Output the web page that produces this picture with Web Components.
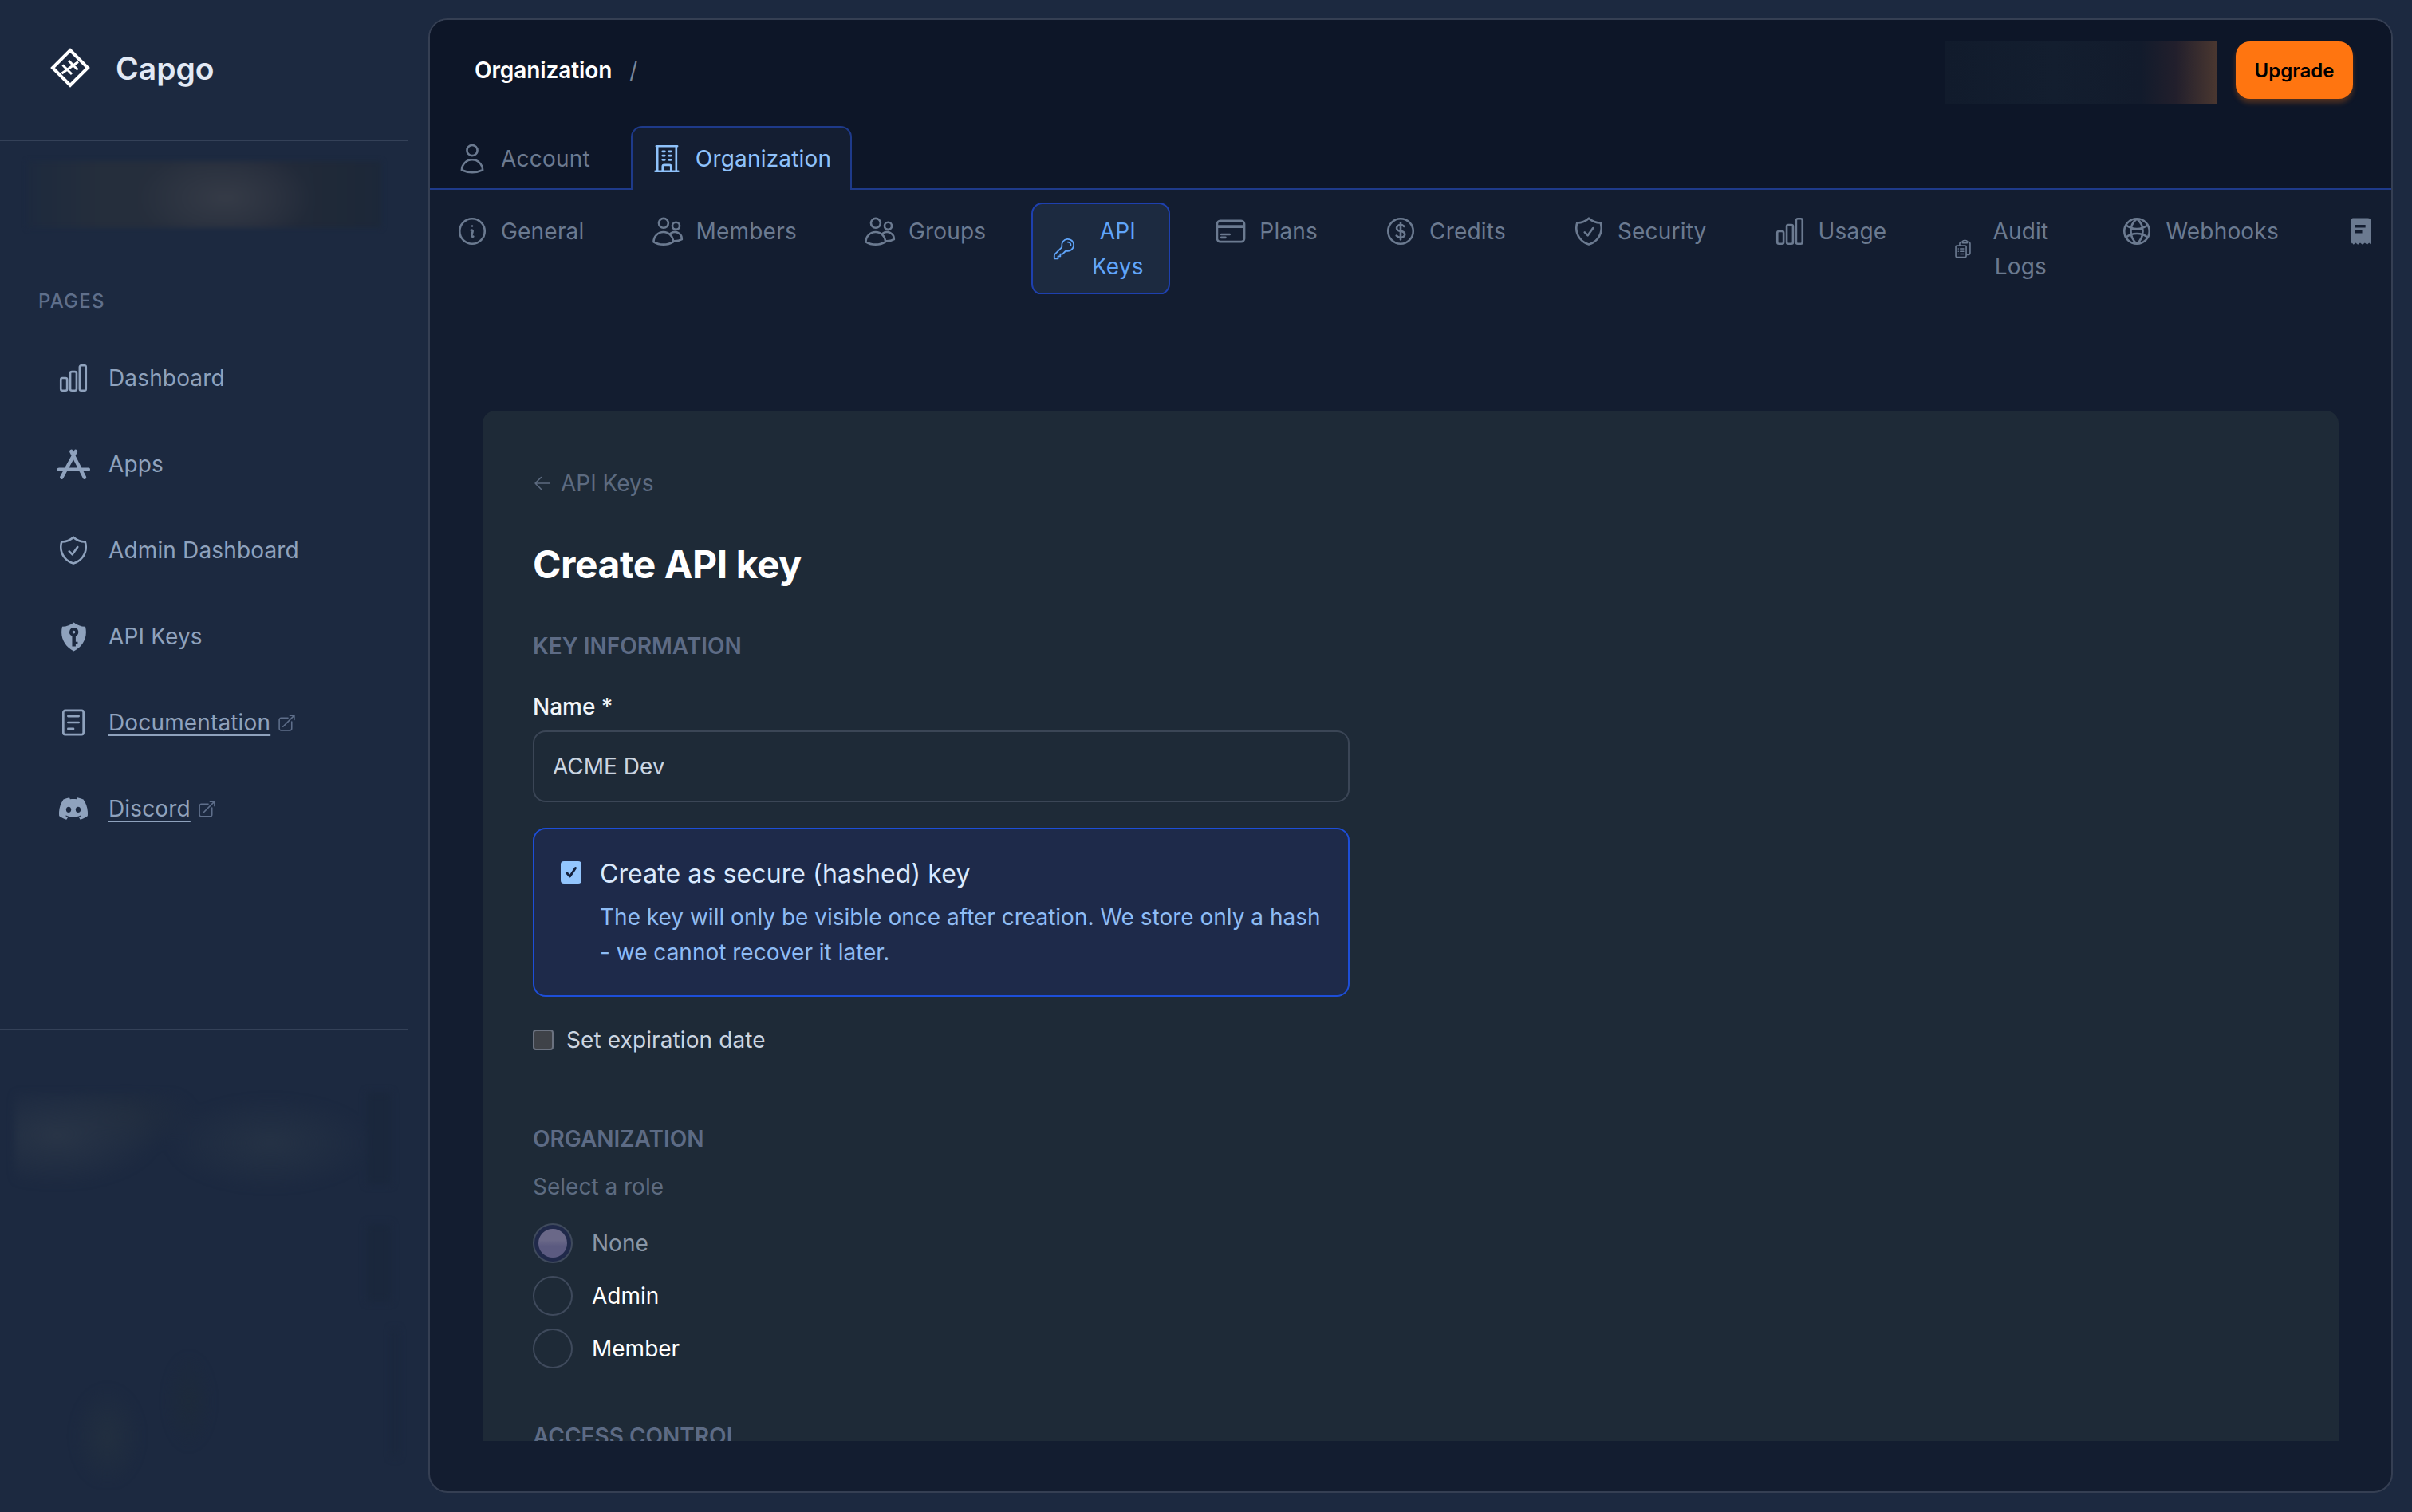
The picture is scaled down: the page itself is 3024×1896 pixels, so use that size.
<!DOCTYPE html>
<html lang="en">
<head>
<meta charset="utf-8">
<title>Capgo</title>
<style>
  html, body { margin: 0; padding: 0; background: #1c2940; }
  body { font-family: Inter, "Noto Sans", sans-serif; width: 3024px; height: 1896px; overflow: hidden; }
</style>
</head>
<body>
<app-shell>
  <side-bar slot="side"></side-bar>
  <main-panel slot="main">
    <form-card></form-card>
  </main-panel>
</app-shell>

<script>
const ICONS = {
  user: 'M15.75 6a3.75 3.75 0 1 1-7.5 0 3.75 3.75 0 0 1 7.5 0ZM4.501 20.118a7.5 7.5 0 0 1 14.998 0A17.933 17.933 0 0 1 12 21.75c-2.676 0-5.216-.584-7.499-1.632Z',
  building: 'M3.75 21h16.5M4.5 3h15M5.25 3v18m13.5-18v18M9 6.75h1.5m-1.5 3h1.5m-1.5 3h1.5m3-6H15m-1.5 3H15m-1.5 3H15M9 21v-3.375c0-.621.504-1.125 1.125-1.125h3.75c.621 0 1.125.504 1.125 1.125V21',
  info: 'm11.25 11.25.041-.02a.75.75 0 0 1 1.063.852l-.708 2.836a.75.75 0 0 0 1.063.853l.041-.021M21 12a9 9 0 1 1-18 0 9 9 0 0 1 18 0Zm-9-3.75h.008v.008H12V8.25Z',
  users: 'M12.5 6.2a3.4 3.4 0 1 1-6.8 0 3.4 3.4 0 0 1 6.8 0ZM20.6 8.2a2.6 2.6 0 1 1-5.2 0 2.6 2.6 0 0 1 5.2 0ZM2 19.6a7 7 0 0 1 14 0c-1.9 1.2-4.3 1.9-7 1.9s-5.100-.7-7-1.900ZM14.300 13.500a5 5 0 0 1 7.900 4.300c-1.300.8-3.100 1.300-5.200 1.300',
  key: 'M15.75 5.25a3 3 0 0 1 3 3m3 0a6 6 0 0 1-7.029 5.912c-.563-.097-1.159.026-1.563.43L10.5 17.25H8.25v2.25H6v2.25H2.25v-2.818c0-.597.237-1.17.659-1.591l6.499-6.499c.404-.404.527-1 .43-1.563A6 6 0 1 1 21.75 8.25Z',
  card: 'M2.25 8.25h19.5M2.25 9h19.5m-16.5 5.25h6m-6 2.25h3m-3.75 3h15a2.25 2.25 0 0 0 2.25-2.25V6.750A2.25 2.25 0 0 0 19.5 4.500h-15a2.25 2.25 0 0 0-2.25 2.25v10.5A2.25 2.25 0 0 0 4.500 19.500Z',
  dollar: 'M12 6v12m-3-2.818.879.659c1.171.879 3.07.879 4.242 0 1.172-.879 1.172-2.303 0-3.182C13.536 12.219 12.768 12 12 12c-.725 0-1.45-.22-2.003-.659-1.106-.879-1.106-2.303 0-3.182s2.9-.879 4.006 0l.415.33M21 12a9 9 0 1 1-18 0 9 9 0 0 1 18 0Z',
  shield: 'M9 12.75 11.25 15 15 9.75m-3-7.036A11.959 11.959 0 0 1 3.598 6 11.99 11.99 0 0 0 3 9.749c0 5.592 3.824 10.29 9 11.623 5.176-1.332 9-6.03 9-11.622 0-1.31-.21-2.571-.598-3.751h-.152c-3.196 0-6.1-1.248-8.25-3.285Z',
  chart: 'M3 13.125C3 12.504 3.504 12 4.125 12h2.25c.621 0 1.125.504 1.125 1.125v6.75C7.5 20.496 6.996 21 6.375 21h-2.25A1.125 1.125 0 0 1 3 19.875v-6.75ZM9.75 8.625c0-.621.504-1.125 1.125-1.125h2.25c.621 0 1.125.504 1.125 1.125v11.25c0 .621-.504 1.125-1.125 1.125h-2.25a1.125 1.125 0 0 1-1.125-1.125V8.625ZM16.5 4.125c0-.621.504-1.125 1.125-1.125h2.25C20.496 3 21 3.504 21 4.125v15.75c0 .621-.504 1.125-1.125 1.125h-2.25a1.125 1.125 0 0 1-1.125-1.125V4.125Z',
  globe: 'M12 21a9 9 0 1 0 0-18 9 9 0 0 0 0 18ZM12 3c-2.800 2.300-4.300 5.400-4.300 9s1.500 6.700 4.300 9c2.800-2.300 4.300-5.400 4.300-9s-1.500-6.700-4.300-9ZM4.200 7.600c2.200 1.800 4.900 2.700 7.800 2.700s5.600-.9 7.800-2.700M4.200 16.400c2.200-1.800 4.900-2.700 7.800-2.700s5.600.9 7.800 2.700',
  clipboard: 'M9 12h3.75M9 15h3.75M9 18h3.75m3 .75H18a2.25 2.25 0 0 0 2.25-2.25V6.108c0-1.135-.845-2.098-1.976-2.192a48.424 48.424 0 0 0-1.123-.08m-5.801 0c-.065.21-.1.433-.1.664 0 .414.336.75.75.75h4.5a.75.75 0 0 0 .75-.75 2.25 2.25 0 0 0-.1-.664m-5.8 0A2.251 2.251 0 0 1 13.5 2.25H15c1.012 0 1.867.668 2.15 1.586m-5.8 0c-.376.023-.75.05-1.124.08C9.095 4.01 8.25 4.973 8.25 6.108V8.25m0 0H4.875c-.621 0-1.125.504-1.125 1.125v11.25c0 .621.504 1.125 1.125 1.125h9.75c.621 0 1.125-.504 1.125-1.125V9.375c0-.621-.504-1.125-1.125-1.125H8.25ZM6.75 12h.008v.008H6.75V12Zm0 3h.008v.008H6.75V15Zm0 3h.008v.008H6.75V18Z',
  back: 'M10.5 19.5 3 12m0 0 7.5-7.5M3 12h18',
  external: 'M13.5 6H5.25A2.25 2.25 0 0 0 3 8.25v10.5A2.25 2.25 0 0 0 5.25 21h10.5A2.25 2.25 0 0 0 18 18.75V10.5m-10.5 6L21 3m0 0h-5.25M21 3v5.25',
  doc: 'M5.500 2.500h13a1.500 1.500 0 0 1 1.500 1.500v16a1.500 1.500 0 0 1-1.500 1.500h-13A1.500 1.500 0 0 1 4 20V4a1.500 1.500 0 0 1 1.500-1.500ZM7.800 7h8.400M7.800 12h8.400M7.800 17h4.200',
  store: 'M10.600 3.650 19.300 20.700M13.560 3.650 4.330 20.700M2.600 15.500h19.200'
};
const FILLED = {
  keyshield: '<path fill-rule="evenodd" d="M12 1.500c2.400 2 5.200 3 8.500 3.100.3 1.300.5 2.700.5 4.100 0 6-3.600 11.300-9 13.800-5.400-2.500-9-7.800-9-13.800 0-1.400.2-2.800.5-4.100 3.300-.1 6.100-1.100 8.500-3.100ZM12 5.300a3.200 3.200 0 0 0-1.200 6.150V19h2.600v-1.500h1.500v-1.900h-1.500v-4.150A3.200 3.200 0 0 0 12 5.300Zm0 2.100a1.100 1.100 0 1 1 0 2.200 1.100 1.100 0 0 1 0-2.200Z"/>',
  discord: '<path d="M20.317 4.3698a19.7913 19.7913 0 00-4.8851-1.5152.0741.0741 0 00-.0785.0371c-.211.3753-.4447.8648-.6083 1.2495-1.8447-.2762-3.68-.2762-5.4868 0-.1636-.3933-.4058-.8742-.6177-1.2495a.077.077 0 00-.0785-.037 19.7363 19.7363 0 00-4.8852 1.515.0699.0699 0 00-.0321.0277C.5334 9.0458-.319 13.5799.0992 18.0578a.0824.0824 0 00.0312.0561c2.0528 1.5076 4.0413 2.4228 5.9929 3.0294a.0777.0777 0 00.0842-.0276c.4616-.6304.8731-1.2952 1.226-1.9942a.076.076 0 00-.0416-.1057c-.6528-.2476-1.2743-.5495-1.8722-.8923a.077.077 0 01-.0076-.1277c.1258-.0943.2517-.1923.3718-.2914a.0743.0743 0 01.0776-.0105c3.9278 1.7933 8.18 1.7933 12.0614 0a.0739.0739 0 01.0785.0095c.1202.099.246.1981.3728.2924a.077.077 0 01-.0066.1276 12.2986 12.2986 0 01-1.873.8914.0766.0766 0 00-.0407.1067c.3604.698.7719 1.3628 1.225 1.9932a.076.076 0 00.0842.0286c1.961-.6067 3.9495-1.5219 6.0023-3.0294a.077.077 0 00.0313-.0552c.5004-5.177-.8382-9.6739-3.5485-13.6604a.061.061 0 00-.0312-.0286zM8.02 15.3312c-1.1825 0-2.1569-1.0857-2.1569-2.419 0-1.3332.9555-2.4189 2.157-2.4189 1.2108 0 2.1757 1.0952 2.1568 2.419 0 1.3332-.9555 2.4189-2.1569 2.4189zm7.9748 0c-1.1825 0-2.1569-1.0857-2.1569-2.419 0-1.3332.9554-2.4189 2.1569-2.4189 1.2108 0 2.1757 1.0952 2.1568 2.419 0 1.3332-.946 2.4189-2.1568 2.4189Z"/>',
  receipt: '<path fill-rule="evenodd" d="M6 1.500h12a2.500 2.500 0 0 1 2.500 2.500v18.500l-1.400-1.300-1.600 1.300-1.800-1.300-1.800 1.300-1.900-1.300-1.800 1.300-1.800-1.300-1.600 1.300-1.300-1.300-.800 1.300V4A2.500 2.500 0 0 1 6 1.500ZM8.200 7v2.200h8V7h-8Zm0 4.400v2.200h5.400v-2.200H8.200Z"/>'
};

class UiIcon extends HTMLElement {
  connectedCallback() {
    const name = this.getAttribute('name');
    const size = this.getAttribute('size') || 42;
    const sw = this.getAttribute('stroke') || 1.5;
    const body = FILLED[name]
      ? `<svg viewBox="0 0 24 24" fill="currentColor">${FILLED[name]}</svg>`
      : `<svg viewBox="0 0 24 24" fill="none" stroke="currentColor" stroke-width="${sw}" stroke-linecap="round" stroke-linejoin="round"><path d="${ICONS[name]}"/></svg>`;
    this.attachShadow({ mode: 'open' }).innerHTML = `
      <style>
        :host { display: inline-flex; flex: none; width: ${size}px; height: ${size}px; }
        svg { width: 100%; height: 100%; display: block; }
      </style>${body}`;
  }
}

class AppShell extends HTMLElement {
  constructor() {
    super();
    this.attachShadow({ mode: 'open' }).innerHTML = `
      <style>
        :host { display: flex; width: 3024px; height: 1896px; background: #1c2940; }
        ::slotted([slot=side]) { flex: none; width: 537px; }
        ::slotted([slot=main]) { flex: 1; min-width: 0; margin: 23px 24px 24px 0; }
      </style>
      <slot name="side"></slot><slot name="main"></slot>`;
  }
}

class NavItem extends HTMLElement {
  connectedCallback() {
    const link = this.hasAttribute('external');
    this.attachShadow({ mode: 'open' }).innerHTML = `
      <style>
        :host { display: flex; align-items: center; height: 108px; padding-left: 74px; color: #8fa2bd; font-size: 28px; letter-spacing: .15px; }
        .ic { width: 36px; display: flex; justify-content: center; margin-right: 26px; }
        a { color: inherit; text-decoration: ${link ? 'underline' : 'none'}; text-underline-offset: 5px; text-decoration-thickness: 2px; }
        .ext { color: #5f6f8b; margin-left: 8px; display: flex; }
      </style>
      <span class="ic"><ui-icon name="${this.getAttribute('icon')}" size="${this.getAttribute('size') || 42}" stroke="${this.getAttribute('stroke') || 1.5}"></ui-icon></span>
      <a><slot></slot></a>
      ${link ? '<span class="ext"><ui-icon name="external" size="25"></ui-icon></span>' : ''}`;
  }
}

class SideBar extends HTMLElement {
  constructor() {
    super();
    this.attachShadow({ mode: 'open' }).innerHTML = `
      <style>
        :host { display: block; }
        .brand { width: 512px; height: 177px; border-bottom: 2px solid #344158; display: flex; align-items: center; padding-bottom: 5px; box-sizing: border-box; }
        .brand svg { width: 50px; height: 50px; margin-left: 63px; }
        .brand b { margin-left: 32px; font-size: 39px; font-weight: 600; color: #e2e9f5; }
        .blur-org { margin: 25px 0 0 34px; width: 444px; height: 84px; filter: blur(3px);
          background: radial-gradient(ellipse 110px 60px at 56% 55%, #353b47 0%, rgba(53,59,71,0) 100%), linear-gradient(90deg, #1d2a3e 0%, #252e3c 22%, #262e3c 45%, #242b3a 68%, #1f2938 85%, #1c2839 100%); }
        .pages { margin: 78px 0 28px 48px; font-size: 24px; line-height: 28px; font-weight: 500; letter-spacing: 1.2px; color: #5f6f8b; }
        .rule { width: 512px; height: 2px; background: #344158; margin-top: 222px; }
        .blur-user { margin: 78px 0 0 18px; width: 486px; height: 490px; filter: blur(5px);
          background:
            radial-gradient(ellipse 130px 65px at 11% 11%, #293547 0%, rgba(41,53,71,0) 100%),
            radial-gradient(ellipse 130px 60px at 66% 13%, #253245 0%, rgba(37,50,69,0) 100%),
            radial-gradient(ellipse 90px 45px at 29% 6%, #212d3f 0%, rgba(33,45,63,0) 100%),
            linear-gradient(#1a273c, #1a273c) 97% 0 / 30px 115px no-repeat,
            linear-gradient(#1a273c, #1a273c) 97% 42% / 30px 97px no-repeat,
            linear-gradient(#1a273c, #1a273c) 99% 90% / 8px 160px no-repeat,
            radial-gradient(ellipse 44px 64px at 24% 88%, #222f40 0%, rgba(34,47,64,0) 100%),
            radial-gradient(ellipse 30px 60px at 45% 79%, #1d2a3b 0%, rgba(29,42,59,0) 100%); }
      </style>
      <div class="brand">
        <svg viewBox="0 0 50 50" fill="none" stroke="#fff">
          <path stroke-width="4" d="M25 3 47 25 25 47 3 25Z"/>
          <path stroke-width="3" d="M14.500 32 35 17.500M15.500 21.500 27 33M23 16 34.500 27.500"/>
        </svg>
        <b>Capgo</b>
      </div>
      <div class="blur-org"></div>
      <div class="pages">PAGES</div>
      <nav>
        <nav-item icon="chart">Dashboard</nav-item>
        <nav-item icon="store" size="46" stroke="2.400">Apps</nav-item>
        <nav-item icon="shield">Admin Dashboard</nav-item>
        <nav-item icon="keyshield" size="41">API Keys</nav-item>
        <nav-item icon="doc" size="38" stroke="1.700" external>Documentation</nav-item>
        <nav-item icon="discord" size="36" external>Discord</nav-item>
      </nav>
      <div class="rule"></div>
      <div class="blur-user"></div>`;
  }
}

class TabItem extends HTMLElement {
  connectedCallback() {
    const wrap = this.getAttribute('wrap');
    const gap = this.getAttribute('gap') || 15;
    this.attachShadow({ mode: 'open' }).innerHTML = `
      <style>
        :host { display: block; flex: none; font-size: 28px; letter-spacing: .2px; line-height: 44px; color: #6b7a90; }
        :host([active]) { margin: 0 -2px; }
        .t { display: flex; align-items: center; gap: ${gap}px; box-sizing: border-box; border: 2px solid transparent; padding: 12px 24px 12px 22px; border-radius: 14px; }
        :host([active]) .t { color: #60a5fa; background: #1c2a40; border-color: #1e40af; padding: 12px 26px 12px 24px; }
        .l { min-height: 44px; ${wrap ? `width: ${wrap}px; text-align: center;` : ''} }
      </style>
      <div class="t">
        <ui-icon name="${this.getAttribute('icon')}" size="${this.getAttribute('size') || 42}"></ui-icon>
        <span class="l"><slot></slot></span>
      </div>`;
  }
}

class TopTab extends HTMLElement {
  connectedCallback() {
    this.attachShadow({ mode: 'open' }).innerHTML = `
      <style>
        :host { display: block; flex: none; font-size: 28px; letter-spacing: .2px; color: #6b7a90; margin-bottom: -2px; }
        .t { display: flex; align-items: center; gap: 15px; height: 80px; box-sizing: border-box; padding: 0 24px 0 22px; border: 2px solid transparent; border-bottom: 0; border-radius: 14px 14px 0 0; }
        :host([active]) .t { color: #8fc2fb; background: #141e32; border-color: #1e3a8a; }
      </style>
      <div class="t"><ui-icon name="${this.getAttribute('icon')}"></ui-icon><span><slot></slot></span></div>`;
  }
}

class MainPanel extends HTMLElement {
  constructor() {
    super();
    this.attachShadow({ mode: 'open' }).innerHTML = `
      <style>
        :host { display: flex; flex-direction: column; box-sizing: border-box; border: 2px solid #353f53; border-radius: 24px; overflow: hidden; background: #131d30; }
        header { flex: none; background: #0d1628; border-bottom: 2px solid #1e3a8a; }
        .top { height: 126px; display: flex; align-items: center; padding: 0 48px 0 56px; }
        .crumb { font-size: 28px; font-weight: 600; letter-spacing: -.1px; color: #fff; }
        .sep { margin-left: 22px; font-size: 28px; color: #7b8799; }
        .blur { margin-left: auto; width: 340px; height: 79px; margin-top: 5px; background: linear-gradient(90deg, #111b2c 0%, #131e2f 40%, #121b2c 72%, #221f2c 85%, #4a3730 100%); }
        .up { margin-left: 24px; width: 147px; height: 72px; border: 0; border-radius: 18px; background: #ff7510; color: #000; font: 600 24px Inter, sans-serif; box-shadow: 0 5px 6px rgba(255,117,16,.28); }
        .tabs { height: 85px; display: flex; align-items: flex-end; gap: 25px; padding-left: 8px; }
        .sub { flex: none; display: flex; align-items: flex-start; gap: 33px; padding: 16px 0 0 8px; overflow: hidden; height: 131px; box-sizing: border-box; }
        ::slotted(*) { flex: 1; min-height: 0; margin: 146px 66px 63px 66px; }
      </style>
      <header>
        <div class="top">
          <span class="crumb">Organization</span><span class="sep">/</span>
          <div class="blur"></div>
          <button class="up">Upgrade</button>
        </div>
        <div class="tabs">
          <top-tab icon="user">Account</top-tab>
          <top-tab icon="building" active>Organization</top-tab>
        </div>
      </header>
      <div class="sub">
        <tab-item icon="info">General</tab-item>
        <tab-item icon="users">Members</tab-item>
        <tab-item icon="users">Groups</tab-item>
        <tab-item icon="key" size="30" gap="14" wrap="76" active>API Keys</tab-item>
        <tab-item icon="card">Plans</tab-item>
        <tab-item icon="dollar">Credits</tab-item>
        <tab-item icon="shield">Security</tab-item>
        <tab-item icon="chart">Usage</tab-item>
        <tab-item icon="clipboard" size="26" gap="17" wrap="84">Audit Logs</tab-item>
        <tab-item icon="globe">Webhooks</tab-item>
        <tab-item icon="receipt" size="38"></tab-item>
      </div>
      <slot></slot>`;
  }
}

class RoleRadio extends HTMLElement {
  connectedCallback() {
    this.attachShadow({ mode: 'open' }).innerHTML = `
      <style>
        :host { display: flex; align-items: center; gap: 24px; height: 50px; font-size: 28px; color: #fff; }
        :host([checked]) { color: #8a97a8; }
        .r { width: 50px; height: 50px; box-sizing: border-box; border: 2px solid #3f4a5c; border-radius: 50%; display: flex; align-items: center; justify-content: center; }
        :host([checked]) .r { background: #20294a; }
        :host([checked]) .r::after { content: ""; width: 36px; height: 36px; border-radius: 50%; background: linear-gradient(#6a6888 0 40%, #5b5a80 60%); }
      </style>
      <span class="r"></span><span><slot></slot></span>`;
  }
}

class FormCard extends HTMLElement {
  constructor() {
    super();
    this.attachShadow({ mode: 'open' }).innerHTML = `
      <style>
        :host { display: block; background: #1e2a37; border-radius: 16px 16px 0 0; overflow: hidden; padding: 71px 0 0 63px; font-size: 28px; line-height: 40px; box-sizing: border-box; }
        .col { width: 1024px; }
        .back { display: flex; align-items: center; gap: 11px; color: #5d6b80; }
        h1 { margin: 52px 0 0; font-size: 48px; line-height: 60px; font-weight: 700; letter-spacing: -.45px; color: #fff; }
        h2 { margin: 0; font-size: 28px; line-height: 40px; font-weight: 600; color: #5d6b85; }
        .name { margin-top: 36px; font-weight: 500; color: #f1f5f9; }
        .input { margin-top: 10px; height: 90px; box-sizing: border-box; border: 2px solid #3b4656; border-radius: 16px; display: flex; align-items: center; padding-left: 23px; color: #cbd5e1; font-size: 28px; }
        .secure { margin-top: 32px; box-sizing: border-box; height: 212px; background: #1e2a4a; border: 2px solid #1d4ed8; border-radius: 16px; padding: 32px 33px 31px 33px; display: flex; gap: 23px; }
        .box { flex: none; width: 26px; height: 28px; margin-top: 8px; border-radius: 4px; background: #93c5fd; display: flex; align-items: center; justify-content: center; }
        .box svg { width: 20px; height: 20px; }
        .title { font-size: 32px; line-height: 48px; letter-spacing: .1px; color: #dbeafe; }
        .desc { margin-top: 8px; line-height: 44px; color: #8ebcf5; }
        .exp { margin-top: 34px; display: flex; align-items: center; gap: 16px; letter-spacing: .1px; color: #cbd5e1; }
        .exp i { width: 26px; height: 26px; box-sizing: border-box; border: 2px solid #6b7280; border-radius: 4px; background: #3f4248; }
        .hint { margin-top: 20px; color: #5d6b80; }
        .radios { margin-top: 26px; display: flex; flex-direction: column; gap: 16px; }
      </style>
      <div class="col">
        <div class="back"><ui-icon name="back" size="24"></ui-icon><span>API Keys</span></div>
        <h1>Create API key</h1>
        <h2 style="margin-top:52px">KEY INFORMATION</h2>
        <div class="name">Name *</div>
        <div class="input">ACME Dev</div>
        <div class="secure">
          <span class="box"><svg viewBox="0 0 20 20" fill="none" stroke="#14213d" stroke-width="3" stroke-linecap="round" stroke-linejoin="round"><path d="M4.500 10.500 8.500 15 15.500 4.500"/></svg></span>
          <div>
            <div class="title">Create as secure (hashed) key</div>
            <div class="desc">The key will only be visible once after creation. We store only a hash - we cannot recover it later.</div>
          </div>
        </div>
        <div class="exp"><i></i><span>Set expiration date</span></div>
        <h2 style="margin-top:84px">ORGANIZATION</h2>
        <div class="hint">Select a role</div>
        <div class="radios">
          <role-radio checked>None</role-radio>
          <role-radio>Admin</role-radio>
          <role-radio>Member</role-radio>
        </div>
        <h2 style="margin-top:65px">ACCESS CONTROL</h2>
      </div>`;
  }
}

customElements.define('ui-icon', UiIcon);
customElements.define('nav-item', NavItem);
customElements.define('side-bar', SideBar);
customElements.define('tab-item', TabItem);
customElements.define('top-tab', TopTab);
customElements.define('role-radio', RoleRadio);
customElements.define('form-card', FormCard);
customElements.define('main-panel', MainPanel);
customElements.define('app-shell', AppShell);
</script>
</body>
</html>
